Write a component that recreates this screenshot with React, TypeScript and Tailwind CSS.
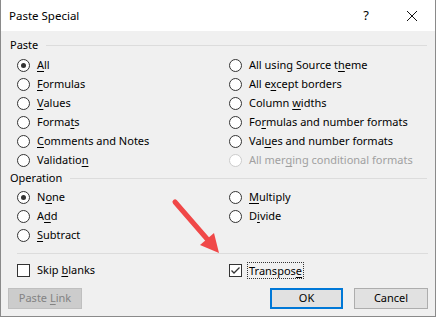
import React from 'react';

const Radio = ({ checked = false, disabled = false }: { checked?: boolean; disabled?: boolean }) => (
  <span
    className={`w-[13px] h-[13px] rounded-full border bg-white flex items-center justify-center shrink-0 ${
      disabled ? 'border-[#cccccc]' : 'border-[#333333]'
    }`}
  >
    {checked && <span className="w-[5px] h-[5px] rounded-full bg-[#333333]" />}
  </span>
);

const Check = ({ checked = false }: { checked?: boolean }) => (
  <span className="w-[13px] h-[13px] border border-[#333333] bg-white flex items-center justify-center shrink-0">
    {checked && (
      <svg width="11" height="11" viewBox="0 0 11 11">
        <path d="M1.5 5.5 L4 8 L9.5 2.5" stroke="#333333" strokeWidth="1.3" fill="none" />
      </svg>
    )}
  </span>
);

// label with one underlined access key
const Label = ({ pre, k, post }: { pre: string; k: string; post: string }) => (
  <span>
    {pre}
    <u className="underline-offset-2">{k}</u>
    {post}
  </span>
);

type Opt = { pre: string; k: string; post: string; checked?: boolean; disabled?: boolean };

const OptRow = ({ o }: { o: Opt }) => (
  <div className={`h-[19px] flex items-center gap-[7px] ${o.disabled ? 'text-[#a0a0a0]' : ''}`}>
    <Radio checked={o.checked} disabled={o.disabled} />
    <Label pre={o.pre} k={o.k} post={o.post} />
  </div>
);

const GroupHeader = ({ title }: { title: string }) => (
  <div className="h-[16px] flex items-center pl-[9px] pr-[8px]">
    <span>{title}</span>
    <div className="flex-1 h-px bg-[#dcdcdc] ml-[8px]" />
  </div>
);

const pasteLeft: Opt[] = [
  { pre: '', k: 'A', post: 'll', checked: true },
  { pre: '', k: 'F', post: 'ormulas' },
  { pre: '', k: 'V', post: 'alues' },
  { pre: 'Forma', k: 't', post: 's' },
  { pre: '', k: 'C', post: 'omments and Notes' },
  { pre: 'Validatio', k: 'n', post: '' },
];

const pasteRight: Opt[] = [
  { pre: 'All using Source t', k: 'h', post: 'eme' },
  { pre: 'All e', k: 'x', post: 'cept borders' },
  { pre: 'Column ', k: 'w', post: 'idths' },
  { pre: 'Fo', k: 'r', post: 'mulas and number formats' },
  { pre: 'Val', k: 'u', post: 'es and number formats' },
  { pre: 'All mer', k: 'g', post: 'ing conditional formats', disabled: true },
];

const opLeft: Opt[] = [
  { pre: 'N', k: 'o', post: 'ne', checked: true },
  { pre: 'A', k: 'd', post: 'd' },
  { pre: '', k: 'S', post: 'ubtract' },
];

const opRight: Opt[] = [
  { pre: '', k: 'M', post: 'ultiply' },
  { pre: 'D', k: 'i', post: 'vide' },
];

export default function App() {
  return (
    <div className="w-[436px] h-[318px] bg-white text-[11px] text-black" style={{ fontFamily: '"Segoe UI", "Noto Sans", sans-serif' }}>
      <div className="relative w-[436px] h-[317px] border-l border-r border-b border-[#8a8a8a] bg-[#f0f0f0] flex flex-col">
        {/* title bar */}
        <div className="h-[31px] bg-white flex items-center">
          <span className="pl-[8px] text-[11.5px] flex-1">Paste Special</span>
          <span className="w-[20px] text-center text-[13px] mr-[30px]">?</span>
          <svg width="12" height="12" viewBox="0 0 12 12" className="mr-[17px]">
            <path d="M1 1 L11 11 M11 1 L1 11" stroke="#111" strokeWidth="1" />
          </svg>
        </div>

        <div className="mt-[6px]">
          <GroupHeader title="Paste" />
        </div>
        <div className="mt-[3px] pl-[16px] grid grid-cols-[212px_1fr]">
          <div className="flex flex-col">
            {pasteLeft.map((o, i) => (
              <OptRow key={i} o={o} />
            ))}
          </div>
          <div className="flex flex-col">
            {pasteRight.map((o, i) => (
              <OptRow key={i} o={o} />
            ))}
          </div>
        </div>

        <GroupHeader title="Operation" />
        <div className="mt-[2px] pl-[16px] grid grid-cols-[212px_1fr]">
          <div className="flex flex-col">
            {opLeft.map((o, i) => (
              <OptRow key={i} o={o} />
            ))}
          </div>
          <div className="flex flex-col">
            {opRight.map((o, i) => (
              <OptRow key={i} o={o} />
            ))}
          </div>
        </div>

        <div className="mt-[8px] ml-[16px] mr-[7px] h-px bg-[#dcdcdc]" />

        <div className="mt-[7px] pl-[16px] grid grid-cols-[212px_1fr]">
          <div className="h-[19px] flex items-center gap-[7px]">
            <Check />
            <Label pre="Skip " k="b" post="lanks" />
          </div>
          <div className="h-[19px] flex items-center gap-[5px]">
            <Check checked />
            <span className="border border-dotted border-[#333333] px-[1px] leading-[15px]">
              <Label pre="Transpos" k="e" post="" />
            </span>
          </div>
        </div>

        <div className="mt-[8px] flex items-center px-[7px]">
          <button className="w-[74px] h-[21px] border border-[#bfbfbf] bg-[#cccccc] text-[#838383] flex items-center justify-center">
            <Label pre="Paste " k="L" post="ink" />
          </button>
          <div className="flex-1" />
          <button className="w-[73px] h-[21px] border-2 border-[#0078d7] bg-[#e1e1e1] flex items-center justify-center">
            OK
          </button>
          <button className="ml-[11px] w-[74px] h-[21px] border border-[#adadad] bg-[#e1e1e1] flex items-center justify-center">
            Cancel
          </button>
        </div>

        {/* annotation arrow */}
        <svg className="absolute left-0 top-0 pointer-events-none" width="436" height="318">
          <line x1="174" y1="202" x2="207" y2="240" stroke="#f04848" strokeWidth="5" strokeLinecap="round" />
          <polygon points="218,253 199,245 213,233" fill="#f04848" />
        </svg>
      </div>
    </div>
  );
}
